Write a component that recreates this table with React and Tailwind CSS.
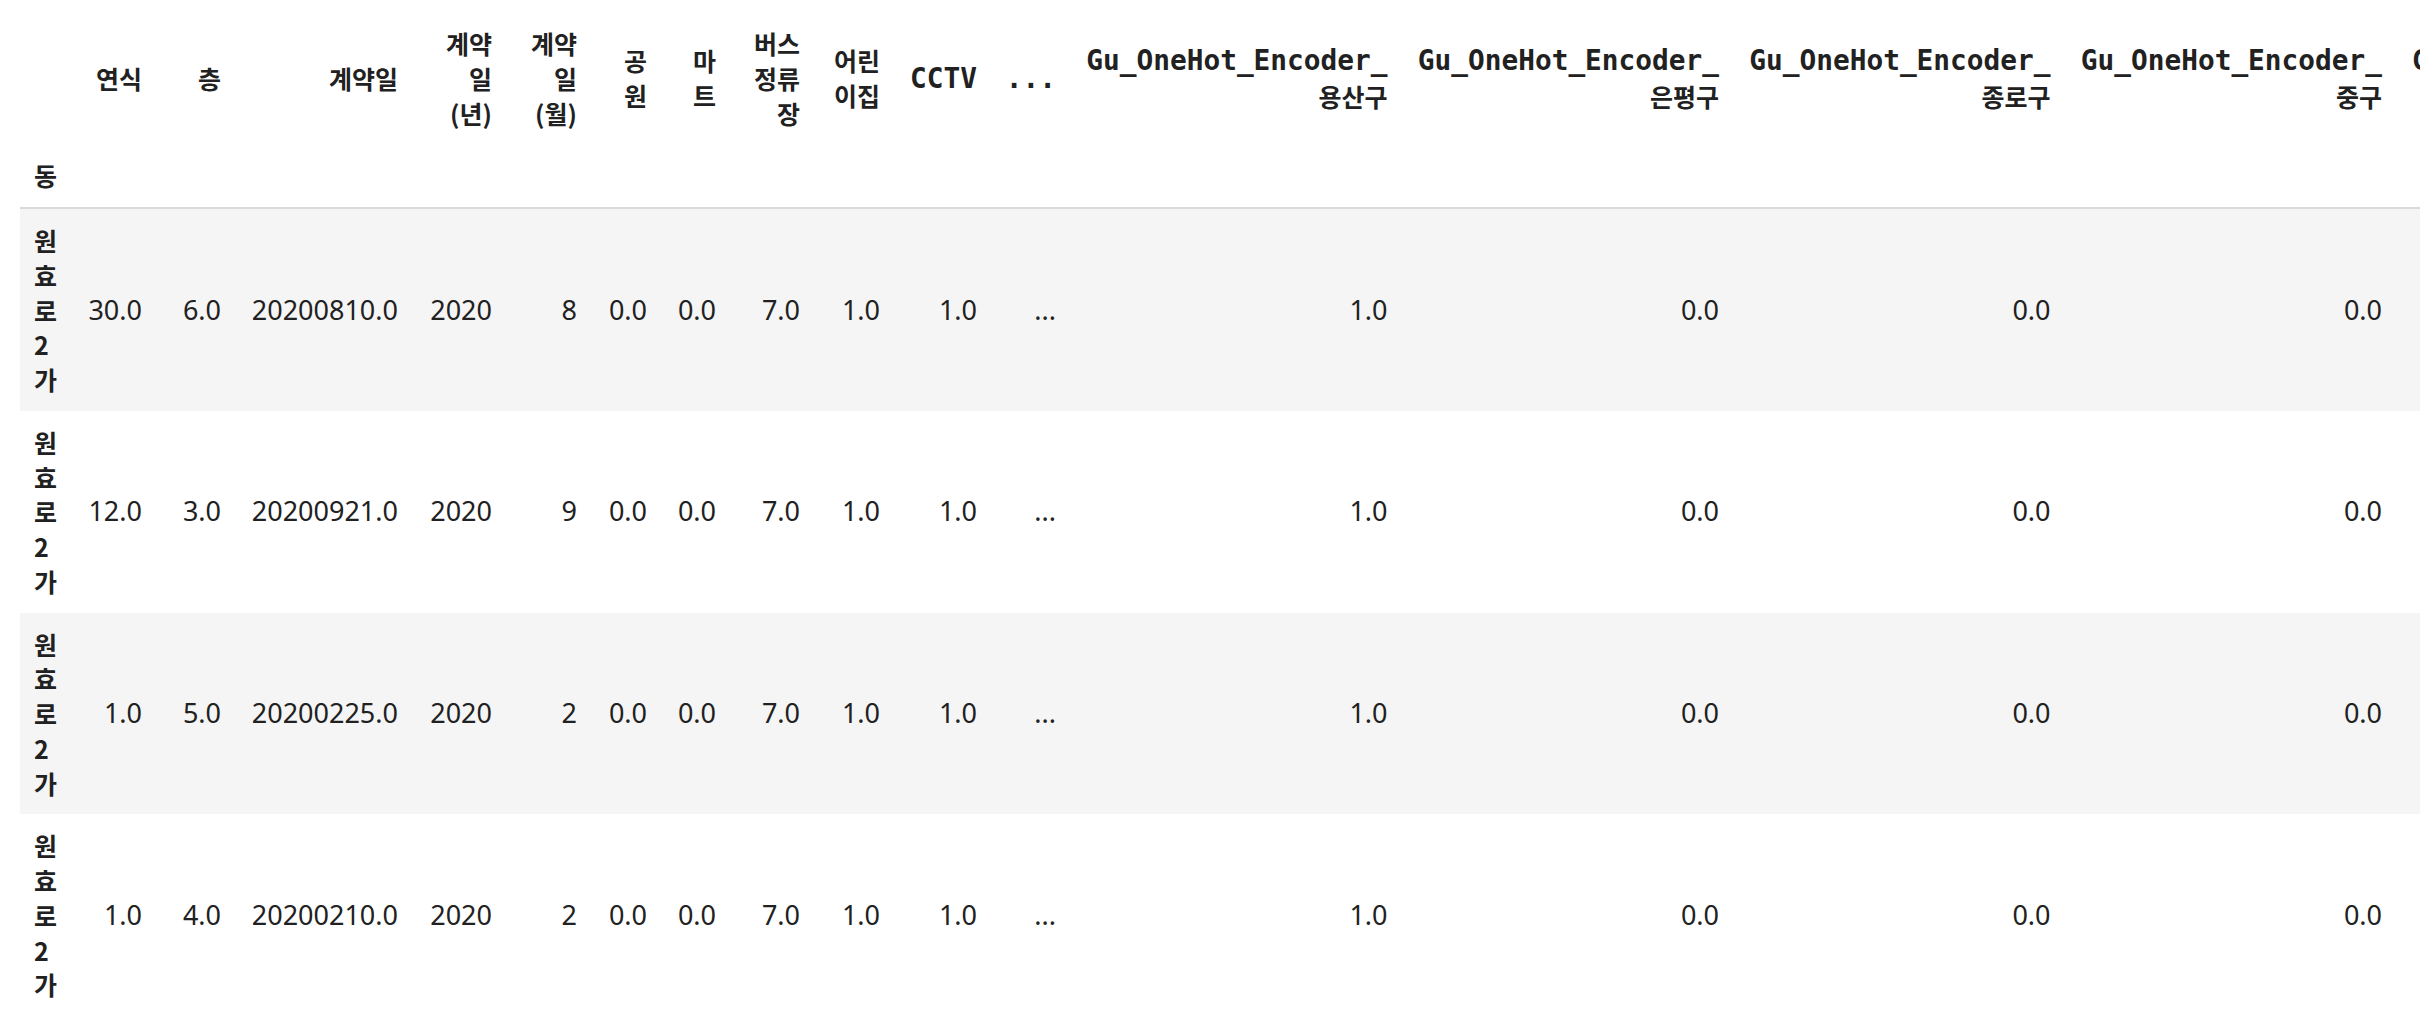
import React from 'react';

const KO = "font-['Noto_Sans_CJK_KR',sans-serif]";
const MONO = "font-['DejaVu_Sans_Mono','Noto_Sans_CJK_KR',monospace] text-[27.8px]";

// header labels: lines are given explicitly, the way the notebook wrapped them
const columns = [
  { lines: ['연식'], w: 'w-[82px]' },
  { lines: ['층'], w: 'w-[79px]' },
  { lines: ['계약일'], w: 'w-[177px]' },
  { lines: ['계약', '일', '(년)'], w: 'w-[94px]' },
  { lines: ['계약', '일', '(월)'], w: 'w-[85px]' },
  { lines: ['공', '원'], w: 'w-[70px]' },
  { lines: ['마', '트'], w: 'w-[69px]' },
  { lines: ['버스', '정류', '장'], w: 'w-[84px]' },
  { lines: ['어린', '이집'], w: 'w-[80px]' },
  { mono: 'CCTV', w: 'w-[97px]' },
  { mono: '...', w: 'w-[79px]' },
  { mono: 'Gu_OneHot_Encoder_', ko: '용산구', w: 'w-[331.5px]' },
  { mono: 'Gu_OneHot_Encoder_', ko: '은평구', w: 'w-[331.5px]' },
  { mono: 'Gu_OneHot_Encoder_', ko: '종로구', w: 'w-[331.5px]' },
  { mono: 'Gu_OneHot_Encoder_', ko: '중구', w: 'w-[331.5px]' },
  { mono: 'Gu_OneHot_Encoder_', ko: '중랑구', w: 'w-[331.5px]' },
];

const tail = ['0.0', '0.0', '7.0', '1.0', '1.0', '...', '1.0', '0.0', '0.0', '0.0', '0.0'];

const rows = [
  { idx: '원효로2가', vals: ['30.0', '6.0', '20200810.0', '2020', '8', ...tail] },
  { idx: '원효로2가', vals: ['12.0', '3.0', '20200921.0', '2020', '9', ...tail] },
  { idx: '원효로2가', vals: ['1.0', '5.0', '20200225.0', '2020', '2', ...tail] },
  { idx: '원효로2가', vals: ['1.0', '4.0', '20200210.0', '2020', '2', ...tail] },
];

const HeaderLabel = ({ col }) => {
  if (col.mono) {
    return (
      <>
        <span className={MONO}>{col.mono}</span>
        {col.ko && <span className={KO}>{col.ko}</span>}
      </>
    );
  }
  return col.lines.map((line, i) => (
    <React.Fragment key={i}>
      {i > 0 && <br />}
      {line}
    </React.Fragment>
  ));
};

const App = () => {
  return (
    <div className="w-screen h-screen overflow-hidden bg-white text-[#212121]">
      <div className="pl-[20px] pt-[12px]">
        <table className="table-fixed border-separate border-spacing-0 w-[2707.5px]">
          <colgroup>
            <col className="w-[54px]" />
            {columns.map((c, i) => (
              <col key={i} className={c.w} />
            ))}
          </colgroup>

          <thead className={`${KO} text-[25px] font-bold leading-[34.75px]`}>
            <tr>
              <th className="p-[14px]"></th>
              {columns.map((c, i) => (
                <th key={i} className="p-[14px] text-right align-middle whitespace-normal">
                  <HeaderLabel col={c} />
                </th>
              ))}
            </tr>
            <tr>
              <th className="p-[14px] text-left align-middle border-b-2 border-[#dadada]">동</th>
              {columns.map((c, i) => (
                <th key={i} className="p-[14px] border-b-2 border-[#dadada]"></th>
              ))}
            </tr>
          </thead>

          <tbody>
            {rows.map((row, r) => (
              <tr key={r} className={r % 2 === 0 ? 'bg-[#f5f5f5]' : 'bg-white'}>
                <th className={`${KO} p-[14px] text-left align-middle text-[25px] font-bold leading-[34.75px]`}>
                  {row.idx}
                </th>
                {row.vals.map((v, i) => (
                  <td
                    key={i}
                    className="p-[14px] text-right align-middle font-['Noto_Sans','Noto_Sans_CJK_KR',sans-serif] text-[27px] leading-[34.75px] whitespace-nowrap"
                  >
                    {v}
                  </td>
                ))}
              </tr>
            ))}
          </tbody>
        </table>
      </div>
    </div>
  );
};

export default App;
